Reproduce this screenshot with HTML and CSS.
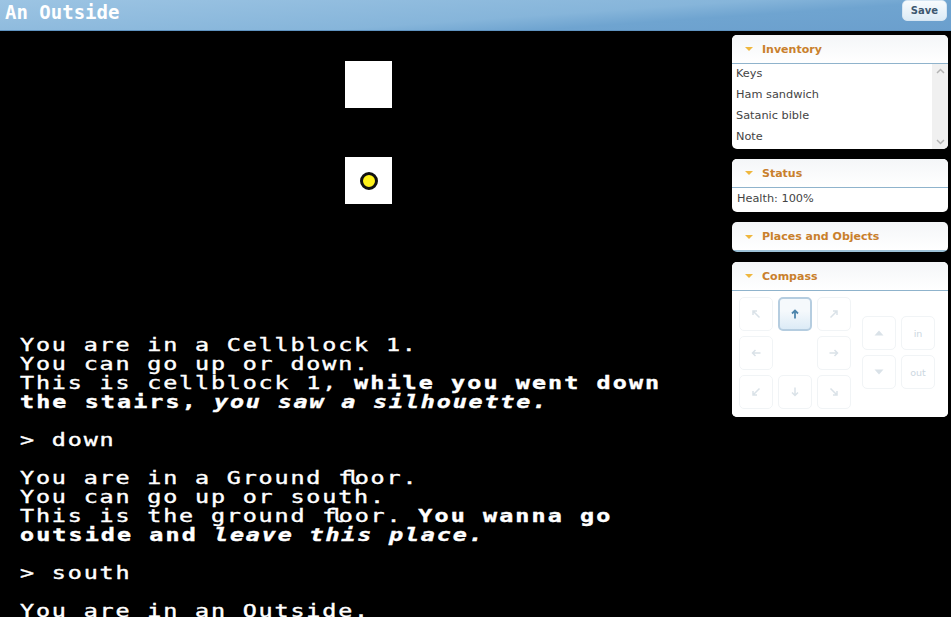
FILE: index.html
```html
<!DOCTYPE html>
<html lang="en">
<head>
    <meta charset="UTF-8">
    <title>An Outside</title>
    <link rel="stylesheet" href="styles.css">
</head>
<body>
    <div class="topbar">
        <h1 class="room-title">An Outside</h1>
        <button class="save-btn">Save</button>
    </div>

    <div class="main">
        <div class="story-col">
            <div class="map">
                <div class="map-room"></div>
                <div class="map-room"><span class="player"></span></div>
            </div>
            <div class="story">
                <p>You are in a Cellblock 1.<br>
                You can go up or down.<br>
                This is cellblock 1, <b>while you went down<br>
                the stairs, <i>you saw a silhouette.</i></b></p>
                <p>&gt; down</p>
                <p>You are in a Ground <span class="lig">fl</span>oor.<br>
                You can go up or south.<br>
                This is the ground <span class="lig">fl</span>oor. <b>You wanna go<br>
                outside and <i>leave this place.</i></b></p>
                <p>&gt; south</p>
                <p>You are in an Outside.</p>
            </div>
        </div>

        <div class="sidebar">
            <div class="panel">
                <div class="panel-head"><span class="caret"></span>Inventory</div>
                <div class="inventory">
                    <ul class="inv-list">
                        <li>Keys</li>
                        <li>Ham sandwich</li>
                        <li>Satanic bible</li>
                        <li>Note</li>
                    </ul>
                    <div class="scrollbar">
                        <svg width="9" height="6" viewBox="0 0 9 6"><path d="M1 5l3.500-3.500L8 5" fill="none" stroke="#b4b4b4" stroke-width="1.5"/></svg>
                        <svg width="9" height="6" viewBox="0 0 9 6"><path d="M1 1l3.500 3.500L8 1" fill="none" stroke="#b4b4b4" stroke-width="1.5"/></svg>
                    </div>
                </div>
            </div>

            <div class="panel">
                <div class="panel-head"><span class="caret"></span>Status</div>
                <div class="status">Health: 100%</div>
            </div>

            <div class="panel panel-closed">
                <div class="panel-head"><span class="caret"></span>Places and Objects</div>
            </div>

            <div class="panel">
                <div class="panel-head"><span class="caret"></span>Compass</div>
                <div class="compass">
                    <div class="dirs">
                        <div class="dir"><svg width="12" height="12" viewBox="0 0 12 12"><path d="M9.500 9.500L3 3M3 7V3h4" class="arrow"/></svg></div>
                        <div class="dir dir-on"><svg width="12" height="12" viewBox="0 0 12 12"><path d="M6 10.500V2.500M3 5.500l3-3 3 3" class="arrow"/></svg></div>
                        <div class="dir"><svg width="12" height="12" viewBox="0 0 12 12"><path d="M2.500 9.500L9 3M5 3h4v4" class="arrow"/></svg></div>
                        <div class="dir"><svg width="12" height="12" viewBox="0 0 12 12"><path d="M10.500 6h-8M5.500 3l-3 3 3 3" class="arrow"/></svg></div>
                        <div class="dir-gap"></div>
                        <div class="dir"><svg width="12" height="12" viewBox="0 0 12 12"><path d="M1.500 6h8M6.500 3l3 3-3 3" class="arrow"/></svg></div>
                        <div class="dir"><svg width="12" height="12" viewBox="0 0 12 12"><path d="M9.500 2.500L3 9M3 5v4h4" class="arrow"/></svg></div>
                        <div class="dir"><svg width="12" height="12" viewBox="0 0 12 12"><path d="M6 1.500v8M3 6.500l3 3 3-3" class="arrow"/></svg></div>
                        <div class="dir"><svg width="12" height="12" viewBox="0 0 12 12"><path d="M2.500 2.500L9 9M9 5v4H5" class="arrow"/></svg></div>
                    </div>
                    <div class="levels">
                        <div class="dir"><svg width="10" height="6" viewBox="0 0 10 6"><path d="M5 .5L9.500 5.500H.5z" class="tri"/></svg></div>
                        <div class="dir dir-word">in</div>
                        <div class="dir"><svg width="10" height="6" viewBox="0 0 10 6"><path d="M5 5.500L9.500 .5H.5z" class="tri"/></svg></div>
                        <div class="dir dir-word">out</div>
                    </div>
                </div>
            </div>
        </div>
    </div>
</body>
</html>
```

FILE: styles.css
```css
html, body {
    margin: 0;
    height: 617px;
    overflow: hidden;
    background-color: #000;
}
body {
    font-family: "DejaVu Sans", sans-serif;
}

/* top bar */
.topbar {
    height: 30px;
    display: flex;
    justify-content: space-between;
    align-items: flex-start;
    padding: 0 4px 0 5px;
    background: linear-gradient(176deg, #9cc4e3 0%, #86b5da 55%, #6fa4d0 70%, #6b9fcd 100%);
    border-bottom: 1px solid #5f93c0;
}
.room-title {
    margin: 1px 0 0;
    font-family: "DejaVu Sans Mono", monospace;
    font-size: 19px;
    line-height: 22px;
    font-weight: bold;
    color: #fff;
}
.save-btn {
    width: 45px;
    height: 21px;
    margin-top: 0;
    padding: 0;
    border: 1px solid #d5e5f2;
    border-radius: 5px;
    background: linear-gradient(#f8fbfd, #dcebf6);
    color: #3d5870;
    font-family: "DejaVu Sans", sans-serif;
    font-size: 10px;
    font-weight: bold;
}

/* left side */
.main {
    display: flex;
}
.story-col {
    width: 732px;
    flex: none;
    overflow: hidden;
}
.map {
    display: flex;
    flex-direction: column;
    gap: 49px;
    padding: 30px 0 0 345px;
    height: 304px;
    box-sizing: border-box;
}
.map-room {
    width: 47px;
    height: 47px;
    background-color: #fff;
    display: flex;
    align-items: center;
    justify-content: center;
}
.player {
    width: 12px;
    height: 12px;
    border: 3px solid #111;
    border-radius: 50%;
    background-color: #fff21a;
}
.story {
    padding-left: 20px;
    width: 540px;
    color: #fff;
    font-family: "DejaVu Sans Mono", monospace;
    font-size: 18px;
    line-height: 19px;
    letter-spacing: 1.4px;
    -webkit-text-stroke: 0.4px #fff;
    white-space: nowrap;
    transform: scaleX(1.3);
    transform-origin: 20px 0;
}
.story p {
    margin: 0 0 19px;
}
.story b {
    letter-spacing: 1.6px;
}
.story i {
    letter-spacing: 1.4px;
}
/* the game font joins these two letters */
.lig {
    letter-spacing: -4.5px;
}

/* right side */
.sidebar {
    width: 216px;
    flex: none;
    display: flex;
    flex-direction: column;
    gap: 10px;
    padding-top: 4px;
}
.panel {
    background-color: #fff;
    border-radius: 5px;
    overflow: hidden;
}
.panel-head {
    height: 29px;
    box-sizing: border-box;
    display: flex;
    align-items: center;
    padding-left: 13px;
    background: linear-gradient(#f4f6f8, #fff);
    border-bottom: 1px solid #8fb3cc;
    color: #c9802c;
    font-size: 11px;
    font-weight: bold;
}
.panel-closed .panel-head {
    height: 30px;
    padding-top: 1px;
    border-bottom: 2px solid #9cc0d6;
}
.caret {
    width: 0;
    height: 0;
    margin-right: 9px;
    border-left: 4px solid transparent;
    border-right: 4px solid transparent;
    border-top: 4px solid #efb73e;
}
.inventory {
    display: flex;
    height: 85px;
}
.inv-list {
    flex: 1;
    margin: 0;
    padding: 0 0 0 4px;
    list-style: none;
    color: #444;
    font-size: 11.3px;
}
.inv-list li {
    height: 21px;
    line-height: 19px;
}
.scrollbar {
    width: 16px;
    display: flex;
    flex-direction: column;
    justify-content: space-between;
    align-items: center;
    padding: 4px 0;
    box-sizing: border-box;
    background-color: #f0f0f0;
}
.status {
    height: 24px;
    padding-left: 5px;
    line-height: 22px;
    color: #444;
    font-size: 11.3px;
}

/* compass */
.compass {
    height: 126px;
    display: flex;
    gap: 11px;
    padding: 6px 0 0 7px;
    box-sizing: border-box;
    background-color: #fff;
}
.dirs {
    display: grid;
    grid-template-columns: repeat(3, 34px);
    grid-auto-rows: 34px;
    gap: 5px;
}
.levels {
    display: grid;
    grid-template-columns: repeat(2, 34px);
    grid-auto-rows: 34px;
    gap: 5px;
    padding-top: 19px;
}
.dir {
    display: flex;
    align-items: center;
    justify-content: center;
    box-sizing: border-box;
    border: 1px solid #f1f4f6;
    border-radius: 5px;
    background-color: #fff;
}
.dir-on {
    border: 2px solid #b5cde0;
    background: linear-gradient(#f5f9fc 40%, #dcebf6);
}
.dir-word {
    color: #ccd7df;
    font-size: 9.5px;
}
.arrow {
    fill: none;
    stroke: #dae2e8;
    stroke-width: 1.5;
}
.dir-on .arrow {
    stroke: #4f86ad;
    stroke-width: 1.8;
}
.tri {
    fill: #dae2e8;
}
```
